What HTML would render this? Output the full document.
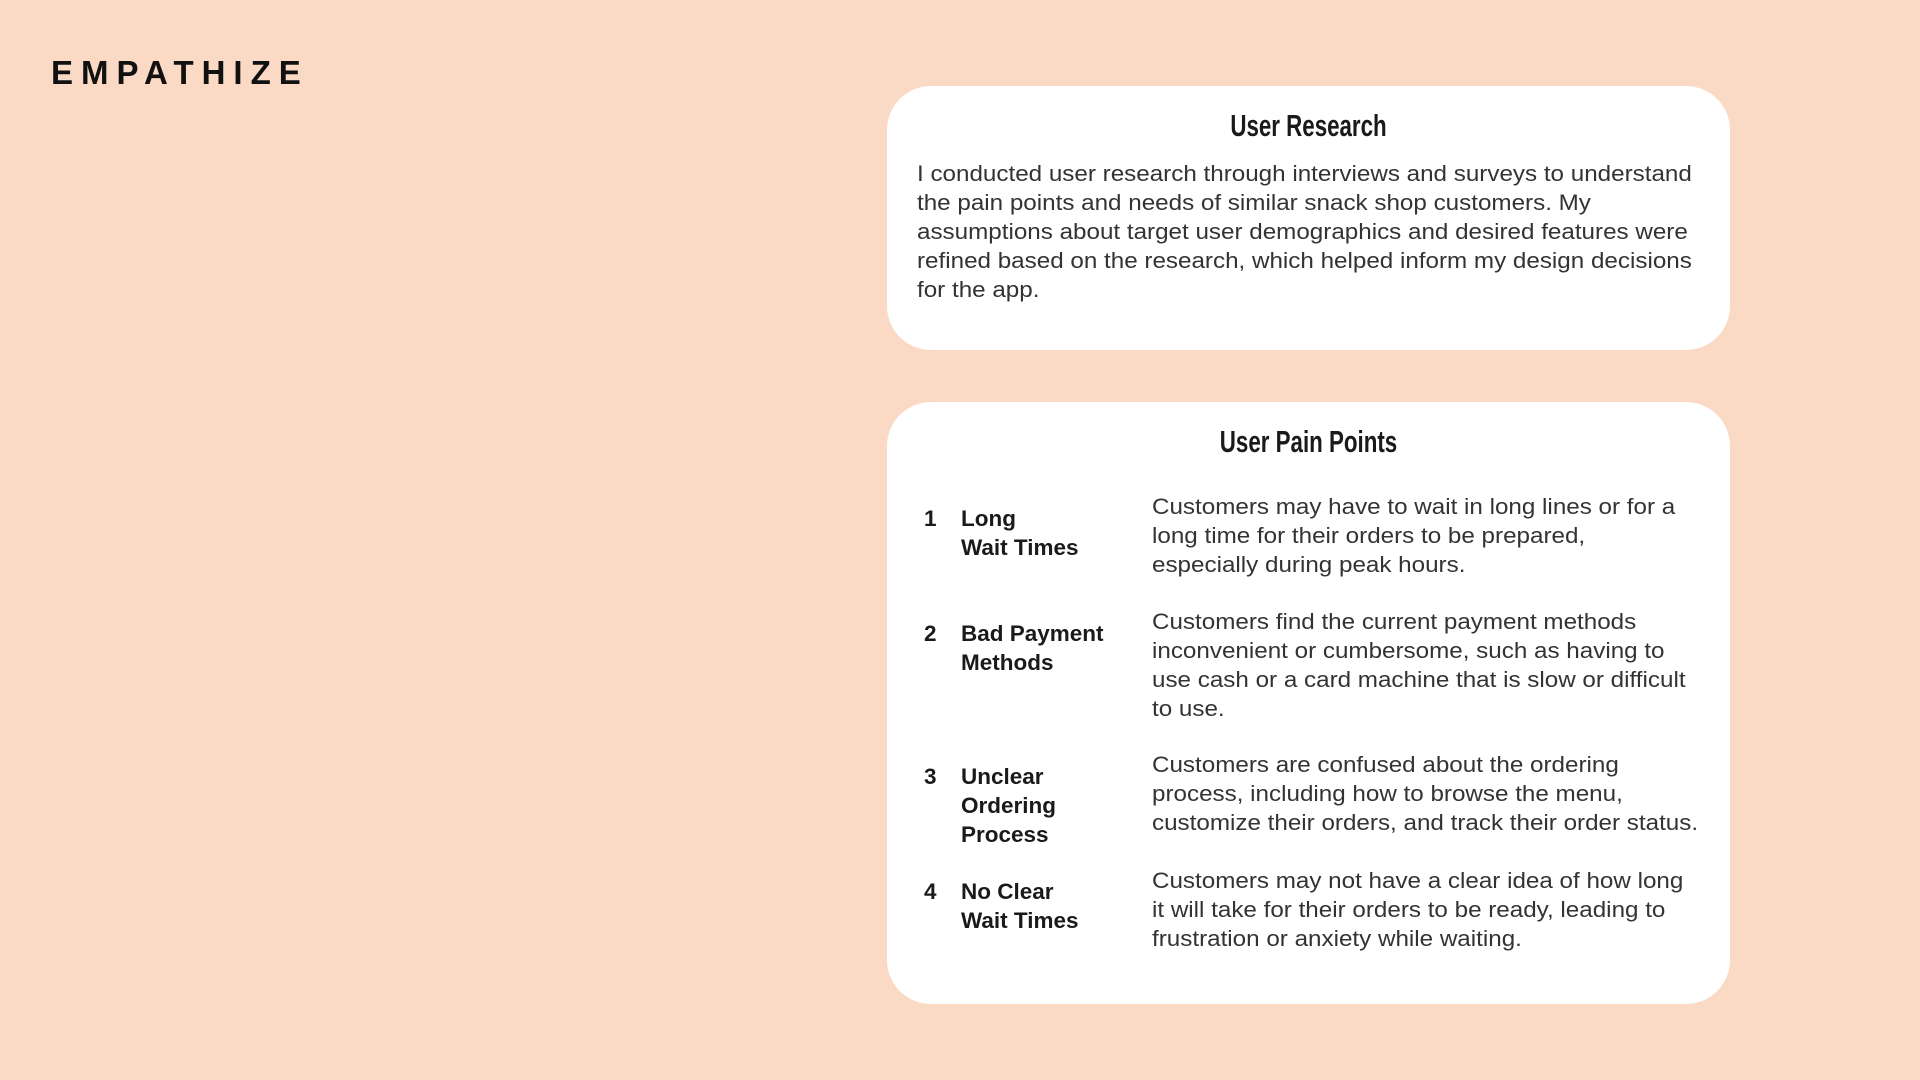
<!DOCTYPE html>
<html><head><meta charset="utf-8"><style>
body{margin:0;width:1920px;height:1080px;background:#FADAC4;position:relative;overflow:hidden;font-family:"Liberation Sans",sans-serif;color:#222}
.t{position:absolute;left:51px;top:54px;font-size:33px;font-weight:bold;letter-spacing:8px;color:#111}
.card{position:absolute;left:887px;width:843px;background:#fff;border-radius:44px}
h2{position:absolute;left:0;right:0;margin:0;text-align:center;font-family:"Liberation Sans Narrow","Liberation Sans",sans-serif;font-weight:bold;font-size:31px;color:#1a1a1a;transform:scaleX(.72)}
.p{position:absolute;font-size:22px;line-height:29px;color:#333;white-space:nowrap;transform:scaleX(1.1);transform-origin:0 0}
.n,.l{position:absolute;font-size:22.5px;line-height:29px;font-weight:bold;color:#1a1a1a}
</style></head><body>
<div class="t">EMPATHIZE</div>
<div class="card" style="top:86px;height:264px">
<h2 style="top:22px">User Research</h2>
<div class="p" style="left:30px;top:73px">I conducted user research through interviews and surveys to understand<br>the pain points and needs of similar snack shop customers. My<br>assumptions about target user demographics and desired features were<br>refined based on the research, which helped inform my design decisions<br>for the app.</div>
</div>
<div class="card" style="top:402px;height:602px">
<h2 style="top:22px">User Pain Points</h2>
<div class="n" style="left:37px;top:102px">1</div><div class="l" style="left:74px;top:102px">Long<br>Wait Times</div>
<div class="p" style="left:265px;top:90px">Customers may have to wait in long lines or for a<br>long time for their orders to be prepared,<br>especially during peak hours.</div>
<div class="n" style="left:37px;top:217px">2</div><div class="l" style="left:74px;top:217px">Bad Payment<br>Methods</div>
<div class="p" style="left:265px;top:205px">Customers find the current payment methods<br>inconvenient or cumbersome, such as having to<br>use cash or a card machine that is slow or difficult<br>to use.</div>
<div class="n" style="left:37px;top:360px">3</div><div class="l" style="left:74px;top:360px">Unclear<br>Ordering<br>Process</div>
<div class="p" style="left:265px;top:348px">Customers are confused about the ordering<br>process, including how to browse the menu,<br>customize their orders, and track their order status.</div>
<div class="n" style="left:37px;top:475px">4</div><div class="l" style="left:74px;top:475px">No Clear<br>Wait Times</div>
<div class="p" style="left:265px;top:464px">Customers may not have a clear idea of how long<br>it will take for their orders to be ready, leading to<br>frustration or anxiety while waiting.</div>
</div>
</body></html>
